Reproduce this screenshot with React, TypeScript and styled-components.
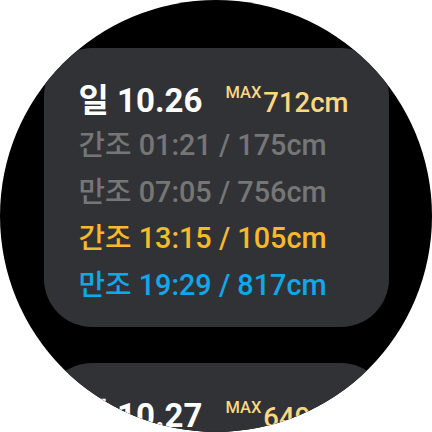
import React from "react";
import styled, { createGlobalStyle } from "styled-components";

const GlobalStyle = createGlobalStyle`
  html, body {
    margin: 0;
    padding: 0;
    background: #ffffff;
  }
  body {
    font-family: Roboto, "Noto Sans CJK KR", sans-serif;
  }
`;

type Tide = { kind: string; time: string; height: number; tone: "past" | "low" | "high" };

type Day = { weekday: string; date: string; max: number; tides: Tide[] };

const days: Day[] = [
  {
    weekday: "일",
    date: "10.26",
    max: 712,
    tides: [
      { kind: "간조", time: "01:21", height: 175, tone: "past" },
      { kind: "만조", time: "07:05", height: 756, tone: "past" },
      { kind: "간조", time: "13:15", height: 105, tone: "low" },
      { kind: "만조", time: "19:29", height: 817, tone: "high" },
    ],
  },
  {
    weekday: "월",
    date: "10.27",
    max: 640,
    tides: [],
  },
];

const toneColor = {
  past: "#767676",
  low: "#f8b92a",
  high: "#10a8ea",
};

const Screen = styled.div`
  width: 432px;
  height: 432px;
  border-radius: 50%;
  background: #000000;
  overflow: hidden;
`;

const List = styled.div`
  display: flex;
  flex-direction: column;
  align-items: center;
  gap: 36px;
  padding-top: 48px;
`;

const Card = styled.section`
  flex: none;
  box-sizing: border-box;
  width: 345px;
  height: 279px;
  border-radius: 48px;
  background: #313235;
  padding: 20px 0 0 35px;
`;

const Header = styled.div`
  display: flex;
  align-items: baseline;
  height: 49px;
  line-height: 49px;
  margin-bottom: 5px;
  white-space: nowrap;
`;

const DateText = styled.span`
  font-size: 33px;
  font-weight: 700;
  color: #ffffff;
`;

const MaxValue = styled.span`
  margin-left: 23px;
  font-size: 27.5px;
  font-weight: 500;
  color: #fcd784;
`;

const MaxLabel = styled.span`
  font-size: 16.5px;
  font-weight: 500;
  vertical-align: 14px;
  margin-right: 2px;
`;

const Row = styled.div<{ $tone: Tide["tone"] }>`
  font-size: 28.8px;
  font-weight: 500;
  line-height: 46.5px;
  white-space: nowrap;
  color: ${(p) => toneColor[p.$tone]};
`;

export default function App() {
  return (
    <>
      <GlobalStyle />
      <Screen>
        <List>
          {days.map((d) => (
            <Card key={d.date}>
              <Header>
                <DateText>
                  {d.weekday} {d.date}
                </DateText>
                <MaxValue>
                  <MaxLabel>MAX</MaxLabel>
                  {d.max}cm
                </MaxValue>
              </Header>
              {d.tides.map((t) => (
                <Row key={t.time} $tone={t.tone}>
                  {t.kind} {t.time} / {t.height}cm
                </Row>
              ))}
            </Card>
          ))}
        </List>
      </Screen>
    </>
  );
}
